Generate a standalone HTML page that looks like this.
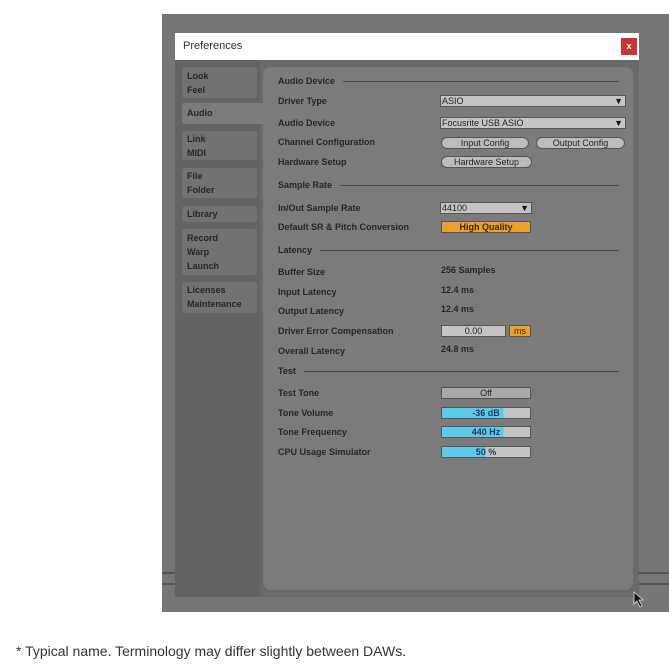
<!DOCTYPE html>
<html><head><style>
body{margin:0;width:669px;height:665px;background:#fff;position:relative;overflow:hidden;font-family:"Liberation Sans",sans-serif}
.a{position:absolute}
.t{position:absolute;font-size:9px;font-weight:bold;color:#262626;white-space:nowrap;line-height:11px}
.tab{position:absolute;left:182px;width:75px;background:#727272;border-radius:3px}
.tab span{position:absolute;left:5px;font-size:9px;font-weight:bold;color:#262626;line-height:14px}
.hl{position:absolute;height:1px;background:#4a4a4a}
.dd{position:absolute;height:10px;background:#c4c4c4;border:1px solid #555;font-size:9px;line-height:10px;color:#222;padding-left:1px;box-sizing:content-box}
.dd b{position:absolute;right:2px;top:0;font-size:9px;color:#111}
.btn{position:absolute;height:10px;background:#bcbcbc;border:1px solid #555;border-radius:6px;font-size:9px;line-height:10px;color:#222;text-align:center}
.bar{position:absolute;height:10px;background:#c4c4c4;border:1px solid #555;font-size:9px;line-height:10px;color:#1a3a5a;text-align:center;font-weight:bold}
</style></head><body>
<div class="a" style="left:162px;top:14px;width:507px;height:598px;background:#767676"></div>
<div class="a" style="left:162px;top:572px;width:507px;height:2px;background:#555"></div>
<div class="a" style="left:162px;top:583px;width:507px;height:2px;background:#555"></div>
<div class="a" style="left:175px;top:33px;width:464px;height:564px;background:#6a6a6a"></div>
<div class="a" style="left:175px;top:33px;width:464px;height:27px;background:#fff"></div>
<div class="a" style="left:183px;top:39px;font-size:11px;color:#333;line-height:14px">Preferences</div>
<div class="a" style="left:621px;top:38px;width:16px;height:17px;background:#c33;color:#fff;font-size:9px;text-align:center;line-height:17px;font-weight:bold">x</div>
<div class="a" style="left:175px;top:60px;width:85px;height:537px;background:#636363"></div>
<div class="a" style="left:263px;top:67px;width:370px;height:523px;background:#7b7b7b;border-radius:8px"></div>
<div class="tab" style="top:67px;height:31px"><span style="top:2px">Look<br>Feel</span></div>
<div class="tab" style="top:103px;height:21px;width:85px;background:#7b7b7b"><span style="top:3px">Audio</span></div>
<div class="tab" style="top:131px;height:29px"><span style="top:1px">Link<br>MIDI</span></div>
<div class="tab" style="top:168px;height:30px"><span style="top:1px">File<br>Folder</span></div>
<div class="tab" style="top:206px;height:16px"><span style="top:1px">Library</span></div>
<div class="tab" style="top:229px;height:46px"><span style="top:2px">Record<br>Warp<br>Launch</span></div>
<div class="tab" style="top:282px;height:31px"><span style="top:1px">Licenses<br>Maintenance</span></div>

<div class="t" style="left:278px;top:76px">Audio Device</div><div class="hl" style="left:343px;top:81px;width:276px"></div>
<div class="t" style="left:278px;top:96px">Driver Type</div>
<div class="dd" style="left:440px;top:95px;width:183px">ASIO<b>▼</b></div>
<div class="t" style="left:278px;top:118px">Audio Device</div>
<div class="dd" style="left:440px;top:117px;width:183px">Focusrite USB ASIO<b>▼</b></div>
<div class="t" style="left:278px;top:137px">Channel Configuration</div>
<div class="btn" style="left:441px;top:137px;width:86px">Input Config</div>
<div class="btn" style="left:536px;top:137px;width:87px">Output Config</div>
<div class="t" style="left:278px;top:157px">Hardware Setup</div>
<div class="btn" style="left:441px;top:156px;width:89px">Hardware Setup</div>
<div class="t" style="left:278px;top:180px">Sample Rate</div><div class="hl" style="left:340px;top:185px;width:279px"></div>
<div class="t" style="left:278px;top:203px">In/Out Sample Rate</div>
<div class="dd" style="left:440px;top:202px;width:89px">44100<b>▼</b></div>
<div class="t" style="left:278px;top:222px">Default SR &amp; Pitch Conversion</div>
<div class="bar" style="left:441px;top:221px;width:88px;background:#e9a02e;color:#3a2a00">High Quality</div>
<div class="t" style="left:278px;top:245px">Latency</div><div class="hl" style="left:320px;top:250px;width:299px"></div>
<div class="t" style="left:278px;top:267px">Buffer Size</div><div class="t" style="left:441px;top:265px">256 Samples</div>
<div class="t" style="left:278px;top:287px">Input Latency</div><div class="t" style="left:441px;top:285px">12.4 ms</div>
<div class="t" style="left:278px;top:306px">Output Latency</div><div class="t" style="left:441px;top:304px">12.4 ms</div>
<div class="t" style="left:278px;top:326px">Driver Error Compensation</div>
<div class="bar" style="left:441px;top:325px;width:63px;color:#222;font-weight:normal">0.00</div>
<div class="bar" style="left:509px;top:325px;width:20px;background:#e9a02e;color:#3a2a00;font-weight:normal">ms</div>
<div class="t" style="left:278px;top:346px">Overall Latency</div><div class="t" style="left:441px;top:344px">24.8 ms</div>
<div class="t" style="left:278px;top:366px">Test</div><div class="hl" style="left:304px;top:371px;width:315px"></div>
<div class="t" style="left:278px;top:388px">Test Tone</div>
<div class="bar" style="left:441px;top:387px;width:88px;background:#a9a9a9;color:#222;font-weight:normal">Off</div>
<div class="t" style="left:278px;top:408px">Tone Volume</div>
<div class="bar" style="left:441px;top:407px;width:88px;background:linear-gradient(90deg,#5ccbeb 70%,#c4c4c4 70%)">-36 dB</div>
<div class="t" style="left:278px;top:427px">Tone Frequency</div>
<div class="bar" style="left:441px;top:426px;width:88px;background:linear-gradient(90deg,#5ccbeb 70%,#c4c4c4 70%)">440 Hz</div>
<div class="t" style="left:278px;top:447px">CPU Usage Simulator</div>
<div class="bar" style="left:441px;top:446px;width:88px;background:linear-gradient(90deg,#5ccbeb 50%,#c4c4c4 50%)">50 %</div>
<svg class="a" style="left:633px;top:591px" width="12" height="18"><path d="M1 1 L1 13 L4 10 L7 16 L9 15 L6 9 L10 9 Z" fill="#111" stroke="#ddd" stroke-width="0.8"/></svg>
<div class="a" style="left:16px;top:643px;font-size:14px;color:#333;line-height:16px">* Typical name. Terminology may differ slightly between DAWs.</div>
</body></html>
